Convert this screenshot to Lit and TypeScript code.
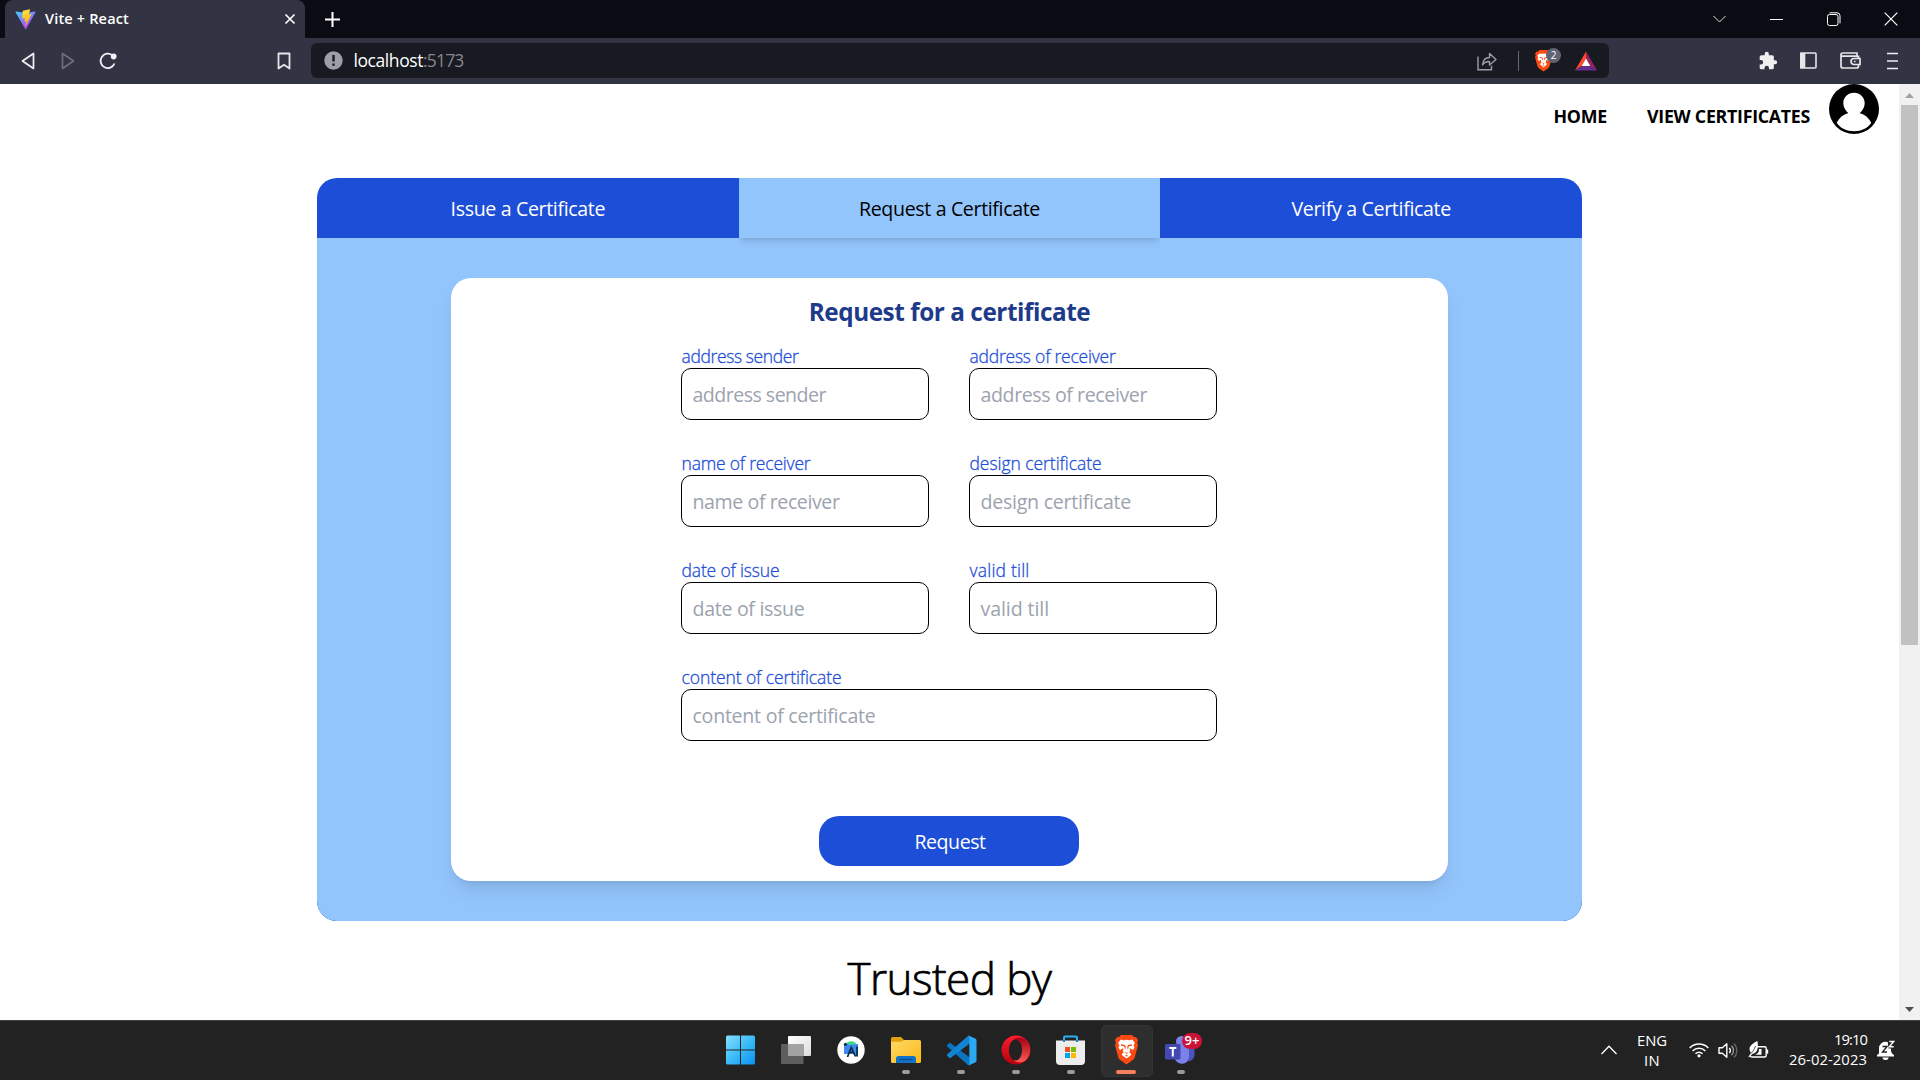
import { LitElement, html, css, svg } from "lit";
import { classMap } from "lit/directives/class-map.js";

/** A run of text whose tracking is tuned so that it takes up a given width. */
class FitText extends LitElement {
  static properties = { w: { type: Number } };
  declare w: number;
  static styles = css`
    :host { display: inline-block; white-space: pre; }
  `;
  render() { return html`<slot></slot>`; }
  firstUpdated() {
    const n = [...(this.textContent ?? "")].length;
    const natural = this.getBoundingClientRect().width;
    if (n && this.w) this.style.letterSpacing = `${(this.w - natural) / n}px`;
  }
}
customElements.define("fit-text", FitText);

const lion = svg`
  <path d="M13 0h-0l5.6.1 2 2.2 1.7-.2L24.6 5l-.9 2.3.8 2.6-3 11.6c-.4 1.600-1.300 2.900-2.600 3.800l-5.900 4.100L7.100 25.300c-1.300-.900-2.200-2.200-2.600-3.800L1.500 9.900l.8-2.600L1.400 5l2.300-2.900 1.700.2 2-2.200z" fill="#fb4a14"/>
  <path d="M13 4.700l3 .5 2.700-.6 2.700 3.300-1.300 2.300.9 2.500-1.500 2.200-3.500-1.900.7 2.400-1 1.800 1.800 1.600v1.400L13 23.400l-4.500-3.200v-1.400l1.800-1.600-1-1.800.7-2.400-3.500 1.900L5 12.700l.9-2.500L4.600 7.900l2.700-3.300 2.700.6z" fill="#fff"/>
  <path d="M7.600 9.300l3.800.8.9 1.400-.6 3.300-1.100-3.500-3-.6zM18.400 9.300l-3.800.8-.9 1.400.6 3.300 1.100-3.500 3-.6zM10.900 17l2.100.8 2.100-.8-2.100 2.100zM11.500 20.500l1.500-.6 1.500.6-1.500 1.200z" fill="#fb4a14"/>`;

const vite = html`<svg width="21" height="21" viewBox="0 0 32 32">
  <defs>
    <linearGradient id="va" x1="0" y1="0" x2=".6" y2="1"><stop offset="0" stop-color="#41d1ff"/><stop offset="1" stop-color="#bd34fe"/></linearGradient>
    <linearGradient id="vb" x1=".4" y1="0" x2=".6" y2="1"><stop offset="0" stop-color="#ffea83"/><stop offset=".1" stop-color="#ffdd35"/><stop offset="1" stop-color="#ffa800"/></linearGradient>
  </defs>
  <path d="M31.200 4.800L16.900 30.400a.8.8 0 0 1-1.400 0L.9 4.800A.8.8 0 0 1 1.700 3.700l14.300 2.500 14.400-2.500a.8.8 0 0 1 .8 1.100z" fill="url(#va)"/>
  <path d="M22.700.5L12.100 2.600a.4.4 0 0 0-.3.400L11.100 14a.4.4 0 0 0 .5.400l3-.7a.4.4 0 0 1 .5.500l-.9 4.300a.4.4 0 0 0 .5.500l1.800-.6a.4.4 0 0 1 .5.500l-1.400 6.700c-.1.400.5.700.7.300l8.800-17.500a.4.400 0 0 0-.4-.6l-3.100.6a.4.4 0 0 1-.5-.5l2-7a.4.4 0 0 0-.4-.5z" fill="url(#vb)"/>
</svg>`;

const TABS = [
  { label: "Issue a Certificate", w: 154.5, active: false },
  { label: "Request a Certificate", w: 181, active: true },
  { label: "Verify a Certificate", w: 159.5, active: false },
];

const FIELDS = [
  { label: "address sender", lw: 117, pw: 133.5 },
  { label: "address of receiver", lw: 146, pw: 166.5 },
  { label: "name of receiver", lw: 129, pw: 147 },
  { label: "design certificate", lw: 132, pw: 150.5 },
  { label: "date of issue", lw: 98, pw: 112 },
  { label: "valid till", lw: 60, pw: 68.5 },
  { label: "content of certificate", lw: 160, pw: 183, wide: true },
];

const APPS = [
  { name: "start", run: false, icon: html`<svg width="30" height="30" viewBox="0 0 30 30">
      <defs><linearGradient id="w" x1="0" y1="0" x2="1" y2="1"><stop offset="0" stop-color="#84e0ff"/><stop offset=".5" stop-color="#3cbcf8"/><stop offset="1" stop-color="#0a90f0"/></linearGradient></defs>
      <path fill="url(#w)" d="M1.500 .5h12.500v14H0V2A1.500 1.500 0 0 1 1.500 .5zM15 .5H27.500A1.500 1.500 0 0 1 29 2v12.500h-14zM0 15.500h14v14H1.500A1.500 1.500 0 0 1 0 28zM15 15.500h14V28a1.500 1.500 0 0 1-1.500 1.500H15z"/></svg>` },
  { name: "task-view", run: false, icon: html`<svg width="30" height="30" viewBox="0 0 30 30">
      <defs><linearGradient id="t" x1="0" y1="0" x2="1" y2="1"><stop offset="0" stop-color="#fff"/><stop offset="1" stop-color="#dcdcdc"/></linearGradient></defs>
      <rect x="7" y="1" width="23" height="20" rx="1" fill="url(#t)"/><rect x="0" y="9" width="22.500" height="20" rx="1" fill="#5e5e5e"/><path d="M7 9h15.500v12H7z" fill="#a3a3a3"/></svg>` },
  { name: "android-studio", run: false, icon: html`<svg width="30" height="30" viewBox="0 0 30 30">
      <circle cx="15" cy="15" r="13.700" fill="#fff"/><path d="M8 9h14v12.500l-5-2.500H8z" fill="#4285f4"/><path d="M10 9.500a5.500 4.500 0 0 1 10.500 0z" fill="#3ddc84"/>
      <circle cx="9.500" cy="9.300" r="1.600" fill="#073042"/><path d="M11.500 22l3.700-9.500 4.300 9M12.300 17.300h5.700M21 11.500v10" fill="none" stroke="#073042" stroke-width="1.700"/></svg>` },
  { name: "explorer", run: true, icon: html`<svg width="30" height="30" viewBox="0 0 30 30">
      <defs><linearGradient id="f" x1="0" y1="0" x2="1" y2="1"><stop offset="0" stop-color="#ffd86a"/><stop offset="1" stop-color="#fcb913"/></linearGradient></defs>
      <path d="M0 8V3.500A1.500 1.500 0 0 1 1.500 2H10l3 3v4z" fill="#e0a008"/><path d="M0 6.800h10L13.500 5h15A1.500 1.500 0 0 1 30 6.500v20a1.500 1.500 0 0 1-1.500 1.500h-27A1.500 1.500 0 0 1 0 26.500z" fill="url(#f)"/>
      <path d="M5 28v-4.500A2.500 2.500 0 0 1 7.500 21h15a2.500 2.500 0 0 1 2.500 2.500V28z" fill="#1173c7"/><path d="M8.500 24.500h13" stroke="#0b4a8c" stroke-width="1.300"/></svg>` },
  { name: "vscode", run: true, icon: html`<svg width="31" height="31" viewBox="0 0 31 31">
      <path d="M1.200 9.900l1.900-1.700a1.500 1.500 0 0 1 1.800 0L25 23.500V29L22.500 30.500 1.200 11.600a1.100 1.100 0 0 1 0-1.700z" fill="#0a74c0"/>
      <path d="M1.200 21l1.900 1.700a1.500 1.500 0 0 0 1.800 0L25 7.500V2L22.500.5 1.200 19.300a1.100 1.100 0 0 0 0 1.700z" fill="#1184d2"/>
      <path d="M22.500.500l6.800 3A2 2 0 0 1 30.500 5.200v20.600a2 2 0 0 1-1.200 1.700l-6.800 3c.5-.3.800-.8.800-1.500V2c0-.7-.3-1.200-.8-1.500z" fill="#2aa8f2"/></svg>` },
  { name: "opera", run: true, icon: html`<svg width="30" height="30" viewBox="0 0 30 30">
      <defs><linearGradient id="o" x1="0" y1="0" x2="0" y2="1"><stop offset="0" stop-color="#ff1b2d"/><stop offset="1" stop-color="#b3020f"/></linearGradient>
      <linearGradient id="p" x1="0" y1="0" x2="0" y2="1"><stop offset="0" stop-color="#a70014"/><stop offset="1" stop-color="#ff5a54"/></linearGradient></defs>
      <circle cx="15" cy="15" r="14.500" fill="url(#o)"/><path d="M13 4c4-2 8-1.500 11.500.5a14.500 14.500 0 0 1 0 21C21 28 17 28 13 26z" fill="url(#p)"/><ellipse cx="14.500" cy="15" rx="6.600" ry="10.500" fill="#222"/></svg>` },
  { name: "store", run: true, icon: html`<svg width="30" height="30" viewBox=".5 0 30 30">
      <path d="M8.500 7V2.600a1 1 0 0 1 1-1h11a1 1 0 0 1 1 1V7" fill="none" stroke="#2bb1f0" stroke-width="2"/><path d="M.5 5.500h29V26a4 4 0 0 1-4 4h-21a4 4 0 0 1-4-4z" fill="#ededed"/><path d="M8.500 7V5M21.500 7V5" stroke="#1587d0" stroke-width="2"/>
      <path d="M9.500 12h5v5h-5z" fill="#f05022"/><path d="M15.500 12h5v5h-5z" fill="#7fba00"/><path d="M9.500 18h5v5h-5z" fill="#00a3ee"/><path d="M15.500 18h5v5h-5z" fill="#ffb900"/></svg>` },
  { name: "brave", run: true, icon: html`<svg width="27" height="30" viewBox="0 0 26 30">${lion}</svg>` },
  { name: "teams", run: true, icon: html`<svg width="38" height="32" viewBox="0 0 38 32">
      <circle cx="19.500" cy="7.500" r="5.500" fill="#7b83eb"/><path d="M24 14h8.500v7.500a6.500 6.500 0 0 1-8.500 5.500z" fill="#4b54bd"/><path d="M12.500 12h14.500v9.500a7.300 7.300 0 0 1-14.500 2z" fill="#7b83eb"/>
      <rect x="3" y="10" width="15.500" height="15.500" rx="1.500" fill="#4349b0"/><path d="M7.300 14h7M10.800 14v8.500" stroke="#fff" stroke-width="2"/></svg>` },
];

class AppRoot extends LitElement {
  static styles = css`
    * { box-sizing: border-box; }
    :host { display: block; width: 1920px; height: 1080px; overflow: hidden; font-family: "Open Sans", "Noto Sans", sans-serif; color: #000; }
    svg { display: block; flex: none; }
    .screen { height: 1080px; display: flex; flex-direction: column; background: #fff; }
    .strip { height: 38px; background: #0b0b14; display: flex; padding: 0 1px 0 5px; flex: none; }
    .tab { width: 300px; height: 38px; background: #323443; border-radius: 8px 8px 0 0; display: flex; align-items: center; padding: 0 9px 0 10px; color: #fff; font-size: 14.500px; font-weight: 600; }
    .tab fit-text { margin-left: 9px; line-height: 37px; height: 38px; }
    .tab .x { margin-left: auto; }
    .plus { align-self: center; margin-left: 20px; }
    .win { margin-left: auto; display: flex; }
    .win div { width: 57px; display: grid; place-items: center; }
    .bar { height: 46px; background: #323443; display: flex; align-items: center; flex: none; padding: 0 7px 1px 8px; }
    .btn { width: 40px; display: grid; place-items: center; flex: none; }
    .mark { margin-left: 136px; }
    .url { margin-left: 7px; width: 1298px; height: 35px; border-radius: 6px; background: #181a21; display: flex; align-items: center; padding: 0 12px 0 13px; font-size: 17.500px; color: #fff; line-height: 34px; }
    .url fit-text { height: 35px; }
    .url .host { margin-left: 10.500px; }
    .port { color: #85888f; }
    .share { margin-left: auto; }
    .rule { width: 1px; height: 20px; background: #676970; margin: 0 15px 0 21px; }
    .shield { position: relative; width: 30px; margin-right: 11px; }
    .count { position: absolute; left: 12px; top: -2px; width: 15px; height: 15px; border-radius: 8px; background: #5f6373; font-size: 10px; line-height: 15px; text-align: center; }
    .tools { margin-left: auto; display: flex; }
    .tools .btn { width: 41.500px; }
    .view { height: 936px; display: flex; flex: none; overflow: hidden; }
    .page { width: 1899px; display: flex; flex-direction: column; align-items: center; }
    .nav { width: 100%; height: 94px; display: flex; justify-content: flex-end; padding-right: 20px; font-size: 17.800px; font-weight: 700; line-height: 64px; flex: none; }
    .nav fit-text { margin-right: 40px; }
    .nav fit-text.last { margin-right: 19px; }
    .board { width: 1265px; height: 743px; border-radius: 20px; background: #1d4ed8; display: flex; flex-direction: column; flex: none; overflow: hidden; }
    .tabs { display: flex; height: 60px; flex: none; }
    .choice { flex: 1; text-align: center; color: #fff; font-size: 19.600px; line-height: 61px; }
    .choice.active { background: #93c5fd; color: #000; box-shadow: 0 5px 7.500px -1.250px rgba(0,0,0,.1), 0 2.500px 5px -2.500px rgba(0,0,0,.1); position: relative; z-index: 1; clip-path: inset(0 0 -20px 0); }
    .body { flex: 1; background: #93c5fd; border-radius: 0 0 20px 20px; display: flex; justify-content: center; padding-top: 40px; }
    .card { width: 997px; height: 603px; border-radius: 20px; background: #fff; box-shadow: 0 12.500px 18.750px -3.750px rgba(0,0,0,.1), 0 5px 7.500px -5px rgba(0,0,0,.1); display: flex; flex-direction: column; align-items: center; padding-right: 1px; }
    h1 { margin: 15px 0 0; height: 50px; padding-left: 1px; font-size: 24.300px; line-height: 37px; color: #1e3a8a; font-weight: 700; }
    .form { width: 536px; display: grid; grid-template-columns: 248px 248px; column-gap: 40px; row-gap: 30px; }
    .wide { grid-column: 1 / 3; }
    .label { height: 25px; padding-left: .5px; font-size: 17.500px; line-height: 26px; color: #1d4ed8; font-weight: 300; -webkit-text-stroke: .3px #1d4ed8; }
    .input { height: 52px; border: 1px solid #000; border-radius: 10px; padding-left: 10.500px; font-size: 19.600px; line-height: 52px; color: #9ca3af; }
    .send { margin-top: 75px; width: 260px; height: 50px; border: 0; border-radius: 20px; background: #1d4ed8; color: #fff; font: 19.600px/51px "Open Sans", sans-serif; padding: 0 0 0 2px; }
    .trusted { font-size: 44px; line-height: 60px; margin-top: 27px; font-weight: 300; -webkit-text-stroke: .7px #000; }
    .scroll { width: 21px; background: #f1f1f1; display: flex; flex-direction: column; align-items: center; padding: 9px 0 8px; }
    .thumb { width: 17px; height: 540px; background: #c1c1c1; margin: 7px 0 auto; }
    .task { height: 60px; background: #222; border-top: 1px solid #414141; display: flex; padding-left: 713px; flex: none; color: #fff; }
    .app { width: 55px; display: grid; place-items: center; position: relative; }
    .app.brave::before { content: ""; position: absolute; left: 3px; top: 4px; width: 50px; height: 50px; background: #2e2e2e; border: 1px solid #343434; border-radius: 5px; }
    .app svg { position: relative; top: -.5px; left: .5px; }
    .app.run::after { content: ""; position: absolute; left: 24px; top: 49px; width: 8px; height: 4px; border-radius: 2px; background: #9a9a9a; }
    .app.brave::after { left: 18px; width: 20px; background: #f4805f; }
    .badge { position: absolute; left: 29px; top: 12px; width: 20px; height: 16px; border-radius: 8px; background: #cb1237; font-size: 13px; font-weight: 600; line-height: 15px; text-align: center; }
    .tray { margin-left: auto; width: 319px; display: flex; align-items: center; font-size: 14.800px; line-height: 20px; padding-bottom: 1px; }
    .lang { text-align: center; width: 30px; margin-left: 20px; padding-bottom: 1px; }
    .clock { text-align: right; width: 80px; margin-left: 18px; margin-right: 10px; padding-bottom: 2px; }
    .tray svg + svg { margin-left: 9px; }
    .wifi { margin-left: 22px; }
  `;

  render() {
    return html`<div class="screen">
      <div class="strip">
        <div class="tab">${vite}<fit-text .w=${84}>Vite + React</fit-text>
          <svg class="x" width="12" height="12" viewBox="0 0 12 12" stroke="#fff" stroke-width="1.700"><path d="M1.500 1.500l9 9M10.500 1.500l-9 9"/></svg>
        </div>
        <svg class="plus" width="15" height="15" viewBox="0 0 15 15" stroke="#fff" stroke-width="2"><path d="M7.500 0v15M0 7.500h15"/></svg>
        <div class="win">
          <div><svg width="13" height="8" viewBox="0 0 13 8" fill="none" stroke="#ddd"><path d="M.5 1l6 6 6-6"/></svg></div>
          <div><svg width="13" height="3" viewBox="0 0 13 3"><path d="M0 1h13v1H0z" fill="#fff"/></svg></div>
          <div><svg width="14" height="14" viewBox="0 0 14 14" fill="none" stroke="#fff"><rect x=".5" y="2.500" width="10.500" height="11" rx="2"/><path d="M2.500.8h7.500a3 3 0 0 1 3 3v7.500"/></svg></div>
          <div><svg width="14" height="14" viewBox="0 0 14 14" stroke="#fff" stroke-width="1.200"><path d="M.7.700l12.600 12.600M13.300.7L.7 13.300"/></svg></div>
        </div>
      </div>

      <div class="bar">
        <div class="btn"><svg width="14" height="18" viewBox="0 0 14 18" fill="none" stroke="#f2f2f4" stroke-width="1.700" stroke-linejoin="round"><path d="M12.500 1.500v15L1.500 9z"/></svg></div>
        <div class="btn"><svg width="14" height="18" viewBox="0 0 14 18" fill="none" stroke="#6c6e7a" stroke-width="1.700" stroke-linejoin="round"><path d="M1.500 1.500v15L12.500 9z"/></svg></div>
        <div class="btn"><svg width="18" height="18" viewBox="0 0 18 18" fill="none" stroke="#f2f2f4" stroke-width="1.800"><path d="M13.300 3.200A7.200 7.200 0 1 0 15.500 11.500"/><circle cx="14.700" cy="4.500" r="2" fill="#f2f2f4"/></svg></div>
        <div class="btn mark"><svg width="14" height="18" viewBox="0 0 14 18" fill="none" stroke="#e6e6ea" stroke-width="1.800" stroke-linejoin="round"><path d="M1.500 1.500h11v15L7 12.700 1.500 16.500z"/></svg></div>
        <div class="url">
          <svg width="19" height="19" viewBox="0 0 19 19"><circle cx="9.500" cy="9.500" r="9.200" fill="#9c9fa8"/><path d="M9.500 4v6.500M9.500 12.500v2.300" stroke="#181a21" stroke-width="2.400"/></svg>
          <fit-text class="host" .w=${69.5}>localhost</fit-text><fit-text class="port" .w=${40.5}>:5173</fit-text>
          <svg class="share" width="20" height="20" viewBox="0 0 20 20" fill="none" stroke="#9b9da4" stroke-width="1.400"><path d="M1 5.500V18.700h13.500v-4"/><path d="M5.500 14c.5-5 3-7.500 7-7.500V2.500L19 8.500l-6.500 5.500V10.500c-3.500 0-5.500 1-7 3.500z" stroke-linejoin="round"/></svg>
          <div class="rule"></div>
          <div class="shield"><svg width="19" height="22" viewBox="0 0 26 30">${lion}</svg><div class="count">2</div></div>
          <svg width="22" height="20" viewBox="0 0 23 20"><path d="M11.500 0L0 20l7.500-5.200 4-7z" fill="#ff4724"/><path d="M11.500 0L23 20l-7.500-5.200-4-7z" fill="#9e1f63"/><path d="M0 20h23l-7.500-5.200h-8z" fill="#662d91"/><path d="M11.500 7.300l4.500 7.800H7z" fill="#fff"/></svg>
        </div>
        <div class="tools">
          <div class="btn"><svg width="20" height="20" viewBox="0 0 24 24"><path fill="#f0f0f2" d="M20.500 11H19V7a2 2 0 0 0-2-2h-4V3.500a2.500 2.500 0 0 0-5 0V5H4a2 2 0 0 0-2 2v3.800h1.500a2.700 2.700 0 0 1 0 5.400H2V20a2 2 0 0 0 2 2h3.800v-1.500a2.700 2.700 0 0 1 5.400 0V22H17a2 2 0 0 0 2-2v-4h1.500a2.500 2.500 0 0 0 0-5z"/></svg></div>
          <div class="btn"><svg width="18" height="17" viewBox=".7 0 18 17"><rect x="1" y="1" width="15.700" height="15" rx="1" fill="none" stroke="#e6e6ea" stroke-width="1.600"/><path d="M1 1h5v15H1z" fill="#e6e6ea"/></svg></div>
          <div class="btn"><svg width="21" height="17" viewBox="0 0 21 17" fill="none" stroke="#e6e6ea" stroke-width="1.700"><path d="M18.500 6V3.500M1 2.500V14a2 2 0 0 0 2 2h13.500a2 2 0 0 0 2-2v-1M1.200 4.200h15.300a2 2 0 0 1 2 2M1 3A1.700 1.700 0 0 1 2.700 1H17v3"/><path d="M20 6.500h-6a3 3 0 0 0 0 6h6zM14 9.500h1.500"/></svg></div>
          <div class="btn"><svg width="11" height="18" viewBox="0 0 11 18" stroke="#f0f0f2" stroke-width="1.600"><path d="M0 1.500h11M0 9h11M0 16.500h11"/></svg></div>
        </div>
      </div>

      <div class="view">
        <div class="page">
          <div class="nav">
            <fit-text .w=${53.5}>HOME</fit-text><fit-text class="last" .w=${163}>VIEW CERTIFICATES</fit-text>
            <svg width="50" height="50" viewBox="0 0 50 50"><circle cx="25" cy="25" r="25"/><path d="M25 8.700c6 0 10.700 4.600 10.700 10.300 0 4-2 7.500-5 10.300 5 1.200 9.300 4.500 11.500 9.700-3.600 5.200-9.800 8.200-17.200 8.200S11.400 44.200 7.800 39c2.200-5.200 6.500-8.500 11.500-9.700-3-2.800-5-6.300-5-10.300C14.300 13.300 19 8.700 25 8.700z" fill="#fff"/></svg>
          </div>
          <div class="board">
            <div class="tabs">${TABS.map((t) => html`<div class=${classMap({ choice: true, active: t.active })}><fit-text .w=${t.w}>${t.label}</fit-text></div>`)}</div>
            <div class="body"><div class="card">
              <h1><fit-text .w=${281.5}>Request for a certificate</fit-text></h1>
              <div class="form">${FIELDS.map((f) => html`<div class=${classMap({ wide: !!f.wide })}>
                <div class="label"><fit-text .w=${f.lw}>${f.label}</fit-text></div>
                <div class="input"><fit-text .w=${f.pw}>${f.label}</fit-text></div>
              </div>`)}</div>
              <button class="send"><fit-text .w=${71}>Request</fit-text></button>
            </div></div>
          </div>
          <div class="trusted"><fit-text .w=${204}>Trusted by</fit-text></div>
        </div>
        <div class="scroll">
          <svg width="9" height="5" viewBox="0 0 9 5"><path d="M4.500 0L9 5H0z" fill="#a3a3a3"/></svg>
          <div class="thumb"></div>
          <svg width="9" height="5" viewBox="0 0 9 5"><path d="M4.500 5L9 0H0z" fill="#505050"/></svg>
        </div>
      </div>

      <div class="task">
        ${APPS.map((a) => html`<div class=${classMap({ app: true, run: a.run, brave: a.name === "brave" })}>${a.icon}${a.name === "teams" ? html`<div class="badge">9+</div>` : ""}</div>`)}
        <div class="tray">
          <svg width="16" height="10" viewBox="0 0 16 10" fill="none" stroke="#fff" stroke-width="1.300"><path d="M.5 9L8 1.200 15.500 9"/></svg>
          <div class="lang"><fit-text .w=${30}>ENG</fit-text><fit-text .w=${16}>IN</fit-text></div>
          <svg class="wifi" width="20" height="16" viewBox="0 0 20 16" fill="none" stroke="#fff" stroke-width="1.500"><path d="M.7 6a13 13 0 0 1 18.600 0M3.600 9a9 9 0 0 1 12.800 0M6.500 11.800a5 5 0 0 1 7 0"/><circle cx="10" cy="13.800" r="1.600" fill="#fff" stroke="none"/></svg>
          <svg width="21" height="17" viewBox="0 0 21 17" fill="none" stroke="#fff" stroke-width="1.400"><path d="M1 5.800h3.300L8.800 1.700v13.600L4.300 11.200H1z" stroke-linejoin="round"/><path d="M11.300 6a3.500 3.500 0 0 1 0 5"/><path d="M13.500 3.800a6.500 6.500 0 0 1 0 9.400" stroke="#999"/><path d="M16 1.500a10 10 0 0 1 0 14" stroke="#666"/></svg>
          <svg width="21" height="18" viewBox="0 0 21 18"><path d="M8.500 5.700h8.200a1.500 1.500 0 0 1 1.500 1.500v7.300a1.500 1.500 0 0 1-1.500 1.500H4a1.500 1.500 0 0 1-1.500-1.200" fill="none" stroke="#fff" stroke-width="1.400"/><path d="M18.500 8.500h1.700v4.200h-1.700z" fill="#fff"/><path d="M13.500 8v5.800H6.500C10 13 11.500 10.500 10.800 8z" fill="#fff"/><path d="M9.500 0C10.300 5.500 10 12 4.500 12.800L1 16.500l-.5-1L3 12C-1 6.500 4 2.500 9.500 0z" fill="#fff"/><path d="M3 12.500C5 10 6.500 8.500 7.500 5" stroke="#222" stroke-width=".8" fill="none"/></svg>
          <div class="clock"><fit-text .w=${33}>19:10</fit-text><fit-text .w=${78}>26-02-2023</fit-text></div>
          <svg width="18" height="20" viewBox="0 0 18 20"><path d="M2 13.500V8.500a6.500 6.500 0 0 1 8-6.500h4v9l1 2.500 2 1.500v1.500H0V15z" fill="#fff"/><path d="M5.500 17.500h6a3 2.500 0 0 1-6 0z" fill="#fff"/><path d="M5.500 6.500h4.500L5.500 12H10" fill="none" stroke="#222" stroke-width="1.400"/><path d="M10.500 0h7.500v8.500h-6.500z" fill="#222"/><path d="M12.300 1.500h4.400l-4.400 5.300h4.400" fill="none" stroke="#fff" stroke-width="1.400"/></svg>
        </div>
      </div>
    </div>`;
  }
}
customElements.define("app-root", AppRoot);
